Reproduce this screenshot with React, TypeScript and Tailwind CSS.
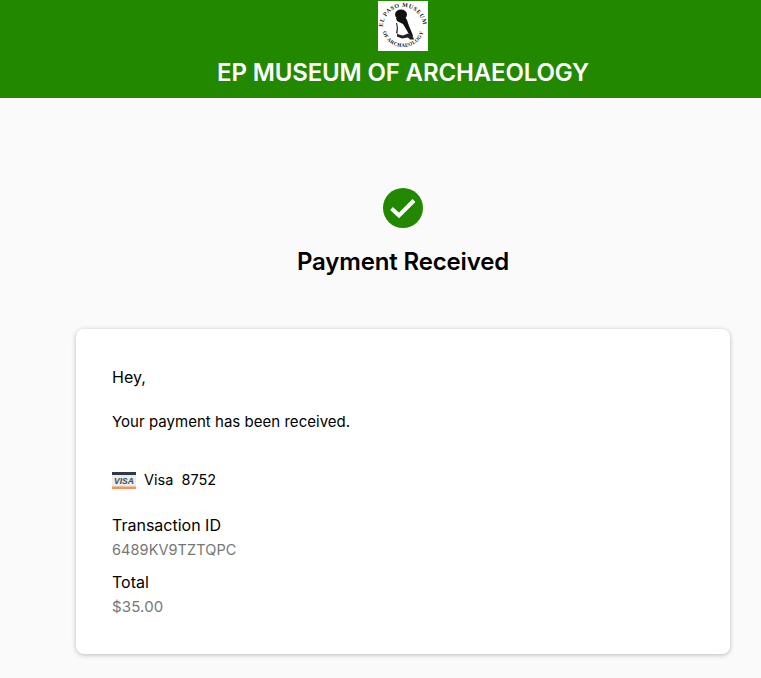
const Logo = () => (
  <div className="w-[50px] h-[50px] bg-white mt-px shrink-0">
    <svg viewBox="0 0 50 50" className="w-[50px] h-[50px]">
      <defs>
        <path id="logoTop" d="M5 26a20 20 0 0 1 40 0" />
        <path id="logoBottom" d="M4.5 31a21.5 21.5 0 0 0 41 0" />
      </defs>
      <text fontSize="6" fontWeight="700" letterSpacing="0.5" fontFamily="'Liberation Serif', serif" fill="#222">
        <textPath href="#logoTop" startOffset="0">EL PASO MUSEUM</textPath>
      </text>
      <text fontSize="5.2" fontWeight="700" letterSpacing="0.3" fontFamily="'Liberation Serif', serif" fill="#222">
        <textPath href="#logoBottom" startOffset="0">OF ARCHAEOLOGY</textPath>
      </text>
      {/* seated figure */}
      <ellipse cx="23" cy="13.5" rx="6" ry="5" fill="#111" />
      <path d="M18 17l8-3 3 5 2 6 3 7 1 3h-3l-4-7-3-5-6-3z" fill="#111" />
      <path d="M18 22l1.2 0 .8 5-.5 6-1.5-1 .8-5z" fill="#333" />
      <path d="M19 33l6 1.5 5-2 5 3 1 3h-4l-2-2-6 1-5-2z" fill="#222" />
    </svg>
  </div>
);

const VisaCard = () => (
  <svg width="24" height="17" viewBox="0 0 24 17" className="shrink-0">
    <rect width="24" height="17" rx="1" fill="#ececec" />
    <rect width="24" height="3" fill="#2f3a45" />
    <rect y="14.5" width="24" height="2.5" fill="#f0965a" />
    <text
      x="12"
      y="11.8"
      textAnchor="middle"
      fontSize="8.5"
      fontWeight="700"
      fontStyle="italic"
      fontFamily="'Liberation Sans', sans-serif"
      fill="#3c4a5a"
    >
      VISA
    </text>
  </svg>
);

export default function App() {
  return (
    <div className="h-[678px] overflow-hidden bg-[#fafafa] font-['Inter',sans-serif] text-black">
      <header className="h-[98px] bg-[#228800] flex flex-col items-center pl-[45px]">
        <Logo />
        <h1 className="mt-[7px] text-[24px] leading-[30px] font-semibold text-white tracking-[-0.15px]">
          EP MUSEUM OF ARCHAEOLOGY
        </h1>
      </header>

      <main className="pl-[76px] pr-[31px]">
        <div className="flex flex-col items-center pt-[90px]">
          <svg width="40" height="40" viewBox="0 0 40 40">
            <circle cx="20" cy="20" r="20" fill="#228800" />
            <path d="M8.5 20.5l7.5 7L31 12.5" fill="none" stroke="#fff" strokeWidth="4" />
          </svg>
          <h2 className="mt-[18px] text-[24px] leading-[32px] font-semibold tracking-[-0.15px]">
            Payment Received
          </h2>
        </div>

        <section className="mt-[51px] h-[325px] bg-white rounded-lg shadow-[0_1px_5px_rgba(0,0,0,0.25)] pl-[36px] pt-[38px] text-[16px] leading-[20px]">
          <p>Hey,</p>
          <p className="mt-[25px] text-[15px] tracking-[0.03px]">Your payment has been received.</p>
          <div className="mt-[38px] flex items-center gap-[8px] h-[20px] text-[14.5px]">
            <VisaCard />
            <span>Visa&nbsp;&nbsp;8752</span>
          </div>
          <p className="mt-[25px]">Transaction ID</p>
          <p className="mt-[5px] text-[#777] text-[14.5px] tracking-[0.08px]">6489KV9TZTQPC</p>
          <p className="mt-[12px]">Total</p>
          <p className="mt-[5px] text-[#777] text-[15px] tracking-[0.15px]">$35.00</p>
        </section>
      </main>
    </div>
  );
}
